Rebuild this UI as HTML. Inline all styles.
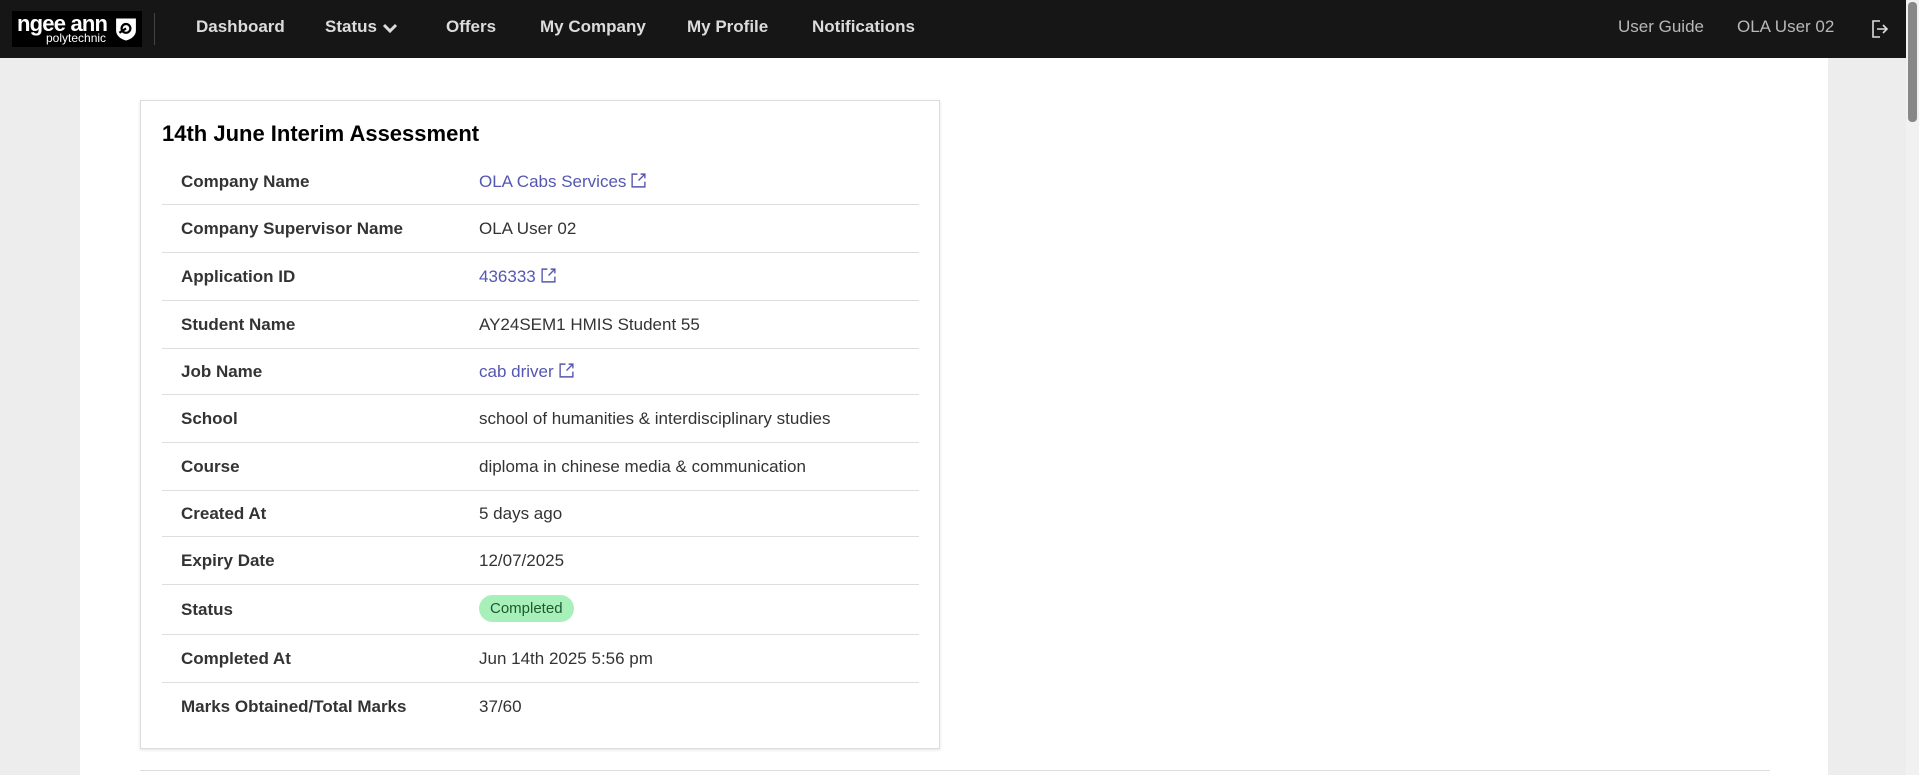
<!DOCTYPE html>
<html><head><style>
*{margin:0;padding:0;box-sizing:border-box}
body{width:1919px;height:775px;overflow:hidden;background:#ededed;font-family:"Liberation Sans",sans-serif;position:relative}
.nav{position:absolute;left:0;top:0;width:1906px;height:58px;background:#161616}
.logo{position:absolute;left:12px;top:11px;width:130px;height:36px;background:#000;color:#fff}
.logo .a{position:absolute;left:5px;top:0px;font-size:22px;font-weight:bold;letter-spacing:-0.8px}
.logo .b{position:absolute;left:34px;top:20px;font-size:12px}
.logo svg{position:absolute;left:103px;top:6px}
.div{position:absolute;left:154px;top:13px;width:1px;height:32px;background:#444}
.ni{position:absolute;top:17px;font-size:17px;font-weight:bold;color:#dcdcdc}
.nr{position:absolute;top:17px;font-size:17px;color:#b8b8b8}
.main{position:absolute;left:80px;top:58px;width:1748px;height:717px;background:#fff}
.sb{position:absolute;left:1906px;top:0;width:13px;height:775px;background:#f1f1f1}
.sb div{position:absolute;left:2px;top:2px;width:9px;height:120px;background:#888;border-radius:4px}
.card{position:absolute;left:140px;top:100px;width:800px;height:649px;border:1px solid #ddd;box-shadow:0 1px 3px rgba(0,0,0,.12)}
.card h2{position:absolute;left:21px;top:20px;font-size:22px;font-weight:bold;color:#000}
.row{position:absolute;left:21px;width:757px;border-bottom:1px solid #dedede;font-size:17px;color:#333}
.row .l{position:absolute;left:19px;font-weight:bold}
.row .v{position:absolute;left:317px}
a{color:#5457b0;text-decoration:none}
a svg{vertical-align:-2px;margin-left:4px}
.badge{display:inline-block;background:#a8f0ba;color:#1c5a2c;font-size:15px;padding:5px 11px;border-radius:15px}
.hr{position:absolute;left:140px;top:770px;width:1630px;height:1px;background:#ddd}
</style></head><body>
<div class="nav">
<div class="logo"><span class="a">ngee ann</span><span class="b">polytechnic</span>
<svg width="22" height="25" viewBox="0 0 20 22"><path d="M1 1h18v11c0 5-5 8-9 9C6 20 1 17 1 12z" fill="#fff"/><circle cx="10" cy="10" r="4" fill="none" stroke="#000" stroke-width="2"/><path d="M4 14l6-4" stroke="#000" stroke-width="2"/></svg></div>
<div class="div"></div>
<span class="ni" style="left:196px">Dashboard</span>
<span class="ni" style="left:325px">Status <svg width="16" height="12" viewBox="0 0 16 12" style="vertical-align:middle"><path d="M2 3l6 6 6-6" stroke="#dcdcdc" stroke-width="3" fill="none"/></svg></span>
<span class="ni" style="left:446px">Offers</span>
<span class="ni" style="left:540px">My Company</span>
<span class="ni" style="left:687px">My Profile</span>
<span class="ni" style="left:812px">Notifications</span>
<span class="nr" style="left:1618px">User Guide</span>
<span class="nr" style="left:1737px">OLA User 02</span>
<svg style="position:absolute;left:1871px;top:19px" width="18" height="20" viewBox="0 0 18 20"><path d="M9 2H2v16h7M6 10h10M12 6l4 4-4 4" stroke="#ddd" stroke-width="1.6" fill="none"/></svg>
</div>
<div class="main"></div>
<div class="sb"><div></div></div>
<div class="card">
<h2>14th June Interim Assessment</h2>
<div class="row" style="top:58px;height:46px"><span class="l" style="top:13px">Company Name</span><span class="v" style="top:13px"><a>OLA Cabs Services<svg width="17" height="17" viewBox="0 0 16 16"><path d="M7 2H2v12h12V9M10 2h4v4M14 2L8 8" stroke="#5457b0" stroke-width="1.3" fill="none"/></svg></a></span></div>
<div class="row" style="top:104px;height:48px"><span class="l" style="top:14px">Company Supervisor Name</span><span class="v" style="top:14px">OLA User 02</span></div>
<div class="row" style="top:152px;height:48px"><span class="l" style="top:14px">Application ID</span><span class="v" style="top:14px"><a>436333<svg width="17" height="17" viewBox="0 0 16 16"><path d="M7 2H2v12h12V9M10 2h4v4M14 2L8 8" stroke="#5457b0" stroke-width="1.3" fill="none"/></svg></a></span></div>
<div class="row" style="top:200px;height:48px"><span class="l" style="top:14px">Student Name</span><span class="v" style="top:14px">AY24SEM1 HMIS Student 55</span></div>
<div class="row" style="top:248px;height:46px"><span class="l" style="top:13px">Job Name</span><span class="v" style="top:13px"><a>cab driver<svg width="17" height="17" viewBox="0 0 16 16"><path d="M7 2H2v12h12V9M10 2h4v4M14 2L8 8" stroke="#5457b0" stroke-width="1.3" fill="none"/></svg></a></span></div>
<div class="row" style="top:294px;height:48px"><span class="l" style="top:14px">School</span><span class="v" style="top:14px">school of humanities &amp; interdisciplinary studies</span></div>
<div class="row" style="top:342px;height:48px"><span class="l" style="top:14px">Course</span><span class="v" style="top:14px">diploma in chinese media &amp; communication</span></div>
<div class="row" style="top:390px;height:46px"><span class="l" style="top:13px">Created At</span><span class="v" style="top:13px">5 days ago</span></div>
<div class="row" style="top:436px;height:48px"><span class="l" style="top:14px">Expiry Date</span><span class="v" style="top:14px">12/07/2025</span></div>
<div class="row" style="top:484px;height:50px"><span class="l" style="top:15px">Status</span><span class="v" style="top:10px"><span class="badge">Completed</span></span></div>
<div class="row" style="top:534px;height:48px"><span class="l" style="top:14px">Completed At</span><span class="v" style="top:14px">Jun 14th 2025 5:56 pm</span></div>
<div class="row" style="top:582px;height:48px;border:none"><span class="l" style="top:14px">Marks Obtained/Total Marks</span><span class="v" style="top:14px">37/60</span></div>
</div>
<div class="hr"></div>
</body></html>
